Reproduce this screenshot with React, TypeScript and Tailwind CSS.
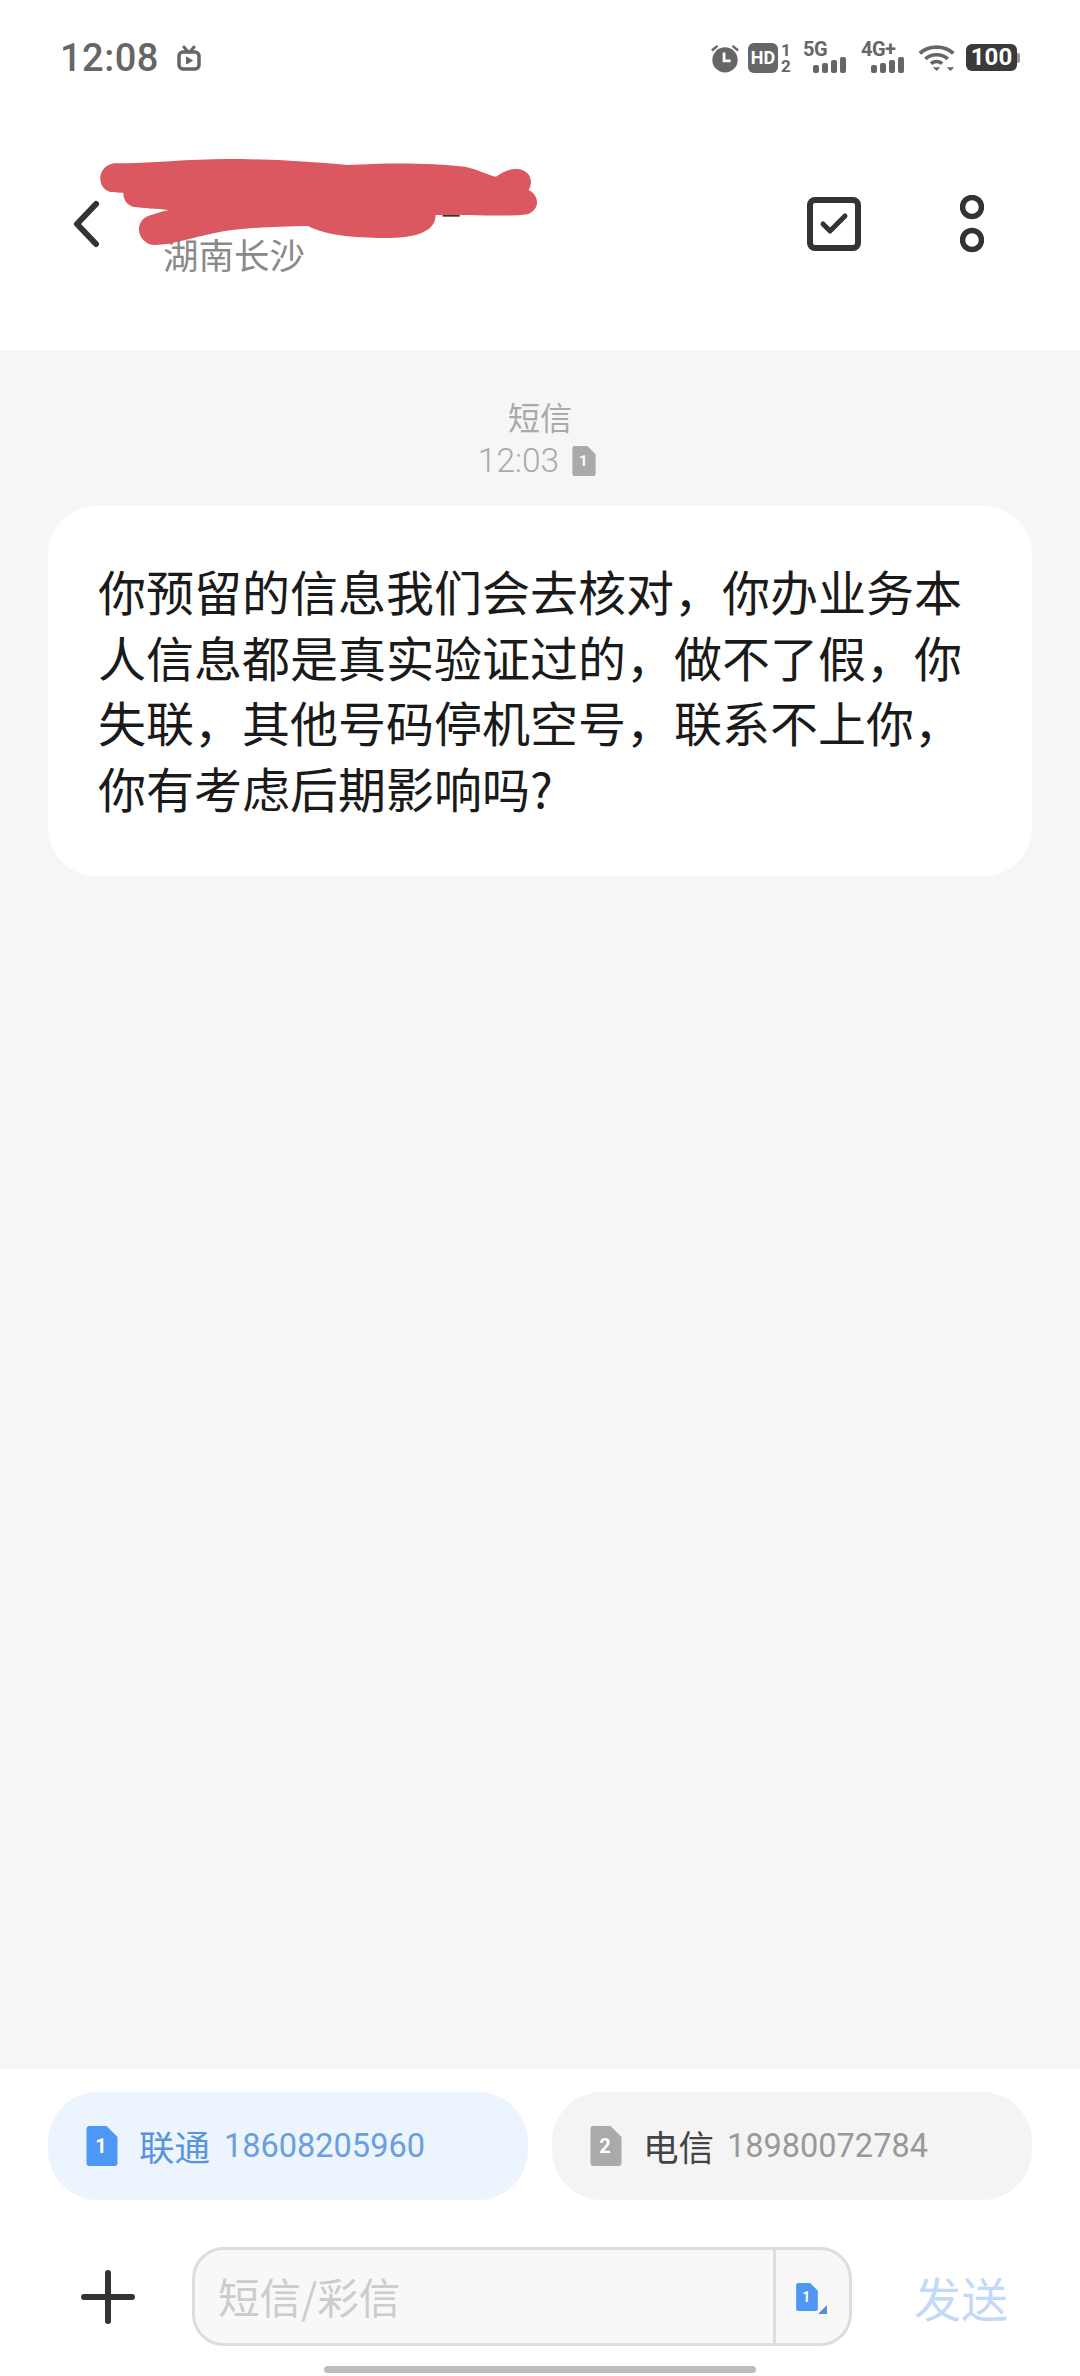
import React from 'react';

const CJK = '"Noto Sans CJK SC", "Noto Sans", sans-serif';
const ink = '#333333';

// sim card glyph with clipped corner, number stays real text
const SimIcon = ({ n, color, w, h }: { n: string; color: string; w: number; h: number }) => (
  <svg width={w} height={h} viewBox="0 0 31 40" className="shrink-0">
    <path d="M3 0H20L31 11V37a3 3 0 0 1-3 3H3a3 3 0 0 1-3-3V3a3 3 0 0 1 3-3Z" fill={color} />
    <text x="14.5" y="27" textAnchor="middle" fontSize="20" fontWeight="700" fill="#fff" fontFamily="Roboto, sans-serif">{n}</text>
  </svg>
);

const SignalBars = () => (
  <div className="flex items-end gap-[3px] h-[16px]">
    <div className="w-[6px] h-[8px] rounded-[2px] bg-[#666666]" />
    <div className="w-[6px] h-[10px] rounded-[2px] bg-[#666666]" />
    <div className="w-[6px] h-[13px] rounded-[2px] bg-[#666666]" />
    <div className="w-[6px] h-[16px] rounded-[2px] bg-[#666666]" />
  </div>
);

const StatusBar = () => (
  <div className="flex items-center justify-between h-[115px] pl-[60px] pr-[60px] text-[#666666]">
    <div className="flex items-center gap-[17px]">
      <span className="text-[38px] leading-none font-medium tracking-[0.5px] font-['Roboto']">12:08</span>
      <svg width="26" height="26" viewBox="0 0 26 26" fill="none" stroke="#666666">
        <path d="M8 2l4 5M18 2l-4 5" strokeWidth="3" strokeLinecap="round" />
        <rect x="3" y="7" width="20" height="17" rx="4" strokeWidth="3.5" />
        <path d="M10.5 12l6 3.5-6 3.5Z" fill="#666666" strokeWidth="1" />
      </svg>
    </div>
    <div className="flex items-center h-[32px] font-['Roboto'] font-bold">
      <svg width="30" height="30" viewBox="0 0 32 32" className="mr-[8px]">
        <circle cx="16" cy="18" r="13.5" fill="#666666" />
        <path d="M15 10v9h7" fill="none" stroke="#fff" strokeWidth="3" />
        <path d="M2 8l6-5M30 8l-6-5" stroke="#666666" strokeWidth="2.5" />
      </svg>
      <div className="w-[30px] h-[30px] rounded-[6px] bg-[#666666] text-white text-[18px] leading-[30px] text-center">HD</div>
      <div className="flex flex-col w-[12px] ml-[2px] text-[17px] leading-[16px] text-center">
        <span>1</span>
        <span>2</span>
      </div>
      <div className="flex flex-col ml-[11px] w-[45px]">
        <span className="text-[20px] leading-[15px] tracking-[-0.5px]">5G</span>
        <div className="ml-[10px]"><SignalBars /></div>
      </div>
      <div className="flex flex-col ml-[13px] w-[45px]">
        <span className="text-[20px] leading-[15px] tracking-[-0.5px]">4G+</span>
        <div className="ml-[10px]"><SignalBars /></div>
      </div>
      <svg width="39" height="30" viewBox="0 0 42 30" className="ml-[12px]" fill="none" stroke="#666666" strokeWidth="4">
        <path d="M2 10C11 1 29 1 38 10" />
        <path d="M8 16c6-6 18-6 24 0" />
        <path d="M14 21c3-3 9-3 12 0" />
        <path d="M16 25h8l-4 4Z" fill="#666666" strokeWidth="0" />
        <path d="M31 25h8l-4 4Z" fill="#666666" strokeWidth="0" />
      </svg>
      <div className="flex items-center ml-[9px]">
        <div className="w-[51px] h-[27px] rounded-[6px] bg-[#3a3a3a] text-white text-[24px] leading-[27px] text-center">100</div>
        <div className="w-[3px] h-[10px] rounded-r-[2px] bg-[#999999]" />
      </div>
    </div>
  </div>
);

const Header = () => (
  <div className="relative h-[350px] bg-white shrink-0">
    <StatusBar />
    <div className="flex items-center h-[218px] pl-[72px]">
      <svg width="28" height="48" viewBox="0 0 28 48" fill="none" stroke={ink} strokeWidth="6" strokeLinecap="round" strokeLinejoin="round" className="shrink-0">
        <path d="M24 4 5 24l19 20" />
      </svg>
      <div className="flex-1 pl-[63px] pt-[62px]">
        <span className="text-[35.5px] leading-none text-[#8a8a8a]" style={{ fontFamily: CJK }}>湖南长沙</span>
      </div>
      <svg width="54" height="54" viewBox="0 0 54 54" fill="none" stroke={ink} className="shrink-0">
        <rect x="3" y="3" width="48" height="48" rx="5" strokeWidth="6" />
        <path d="M16 27l7 7 15-15" strokeWidth="5" strokeLinecap="round" strokeLinejoin="round" />
      </svg>
      <svg width="24" height="58" viewBox="0 0 24 58" fill="none" stroke={ink} strokeWidth="5.5" className="shrink-0 ml-[99px] mr-[96px]">
        <circle cx="12" cy="12" r="9.5" />
        <circle cx="12" cy="45" r="9.5" />
      </svg>
    </div>
    {/* red marker scribble over the contact name */}
    <svg width="540" height="360" viewBox="0 0 1568 1080" preserveAspectRatio="none" className="absolute left-0 top-0">
      <rect x="1285" y="645" width="50" height="5" fill="#333333" />
      <path
        d="M330 490C440 490 550 477 660 477C780 477 900 485 1010 495C1120 488 1250 488 1350 500C1390 508 1415 525 1440 530C1460 515 1480 505 1505 507C1535 510 1552 540 1535 570C1565 585 1570 625 1535 642C1510 650 1380 645 1265 645C1265 690 1220 712 1130 714C1050 714 950 710 895 678C800 680 700 682 620 700C560 712 500 735 450 735C405 735 385 675 425 650C445 642 470 635 490 630C450 625 420 625 385 620C365 612 358 595 358 578C345 578 335 578 320 576C280 565 280 500 330 490Z"
        fill="#dc5860"
      />
    </svg>
  </div>
);

const Thread = () => (
  <div className="flex-1 bg-[#f6f6f6] px-[48px] pt-[46px]" style={{ fontFamily: CJK }}>
    <div className="flex flex-col items-center text-[#aaaaaa]">
      <span className="text-[32px] leading-[40px]">短信</span>
      <div className="flex items-center gap-[13px] h-[40px] mt-[5px] -translate-x-[3px]">
        <span className="text-[33.5px] leading-none font-['Roboto'] font-light">12:03</span>
        <SimIcon n="1" color="#aaaaaa" w={24} h={30} />
      </div>
    </div>
    <div className="mt-[25px] h-[370px] rounded-[48px] bg-white pl-[50px] pr-[48px] pt-[52px] text-[48px] leading-[65.5px] text-[#1a1a1a]">
      你预留的信息我们会去核对，你办业务本人信息都是真实验证过的，做不了假，你失联，其他号码停机空号，联系不上你，你有考虑后期影响吗?
    </div>
  </div>
);

const Composer = () => (
  <div className="h-[307px] bg-white shrink-0 pt-[23px]" style={{ fontFamily: CJK }}>
    <div className="flex gap-[24px] px-[48px]">
      <div className="flex items-center w-[480px] h-[108px] rounded-[50px] bg-[#ecf4fe] pl-[38px]">
        <SimIcon n="1" color="#4f97f5" w={32} h={40} />
        <span className="ml-[21px] text-[35.5px] leading-none text-[#5a94dc]">联通</span>
        <span className="ml-[14px] text-[32.5px] leading-none text-[#6a9edd] font-['Roboto']">18608205960</span>
      </div>
      <div className="flex items-center w-[480px] h-[108px] rounded-[50px] bg-[#f4f4f4] pl-[38px]">
        <SimIcon n="2" color="#aaaaaa" w={32} h={40} />
        <span className="ml-[21px] text-[35.5px] leading-none text-[#444444]">电信</span>
        <span className="ml-[13px] text-[32.5px] leading-none text-[#999999] font-['Roboto']">18980072784</span>
      </div>
    </div>
    <div className="flex items-center mt-[47px] h-[99px]">
      <svg width="54" height="54" viewBox="0 0 54 54" stroke={ink} strokeWidth="6" strokeLinecap="round" className="ml-[81px] shrink-0">
        <path d="M27 3v48M3 27h48" />
      </svg>
      <div className="flex items-stretch ml-[57px] w-[660px] h-[99px] rounded-[32px] border-[3px] border-[#dddddd] bg-[#f8f8f8]">
        <div className="flex-1 flex items-center pl-[23px] text-[41.5px] leading-none text-[#cccccc]">短信/彩信</div>
        <div className="relative flex items-center w-[76px] border-l-[3px] border-[#dddddd] pl-[20px]">
          <SimIcon n="1" color="#4f97f5" w={22} h={28} />
          <svg width="9" height="9" viewBox="0 0 9 9" className="absolute left-[42px] top-[55px]">
            <path d="M9 0V9H0Z" fill="#5a8fd8" />
          </svg>
        </div>
      </div>
      <span className="ml-[62px] text-[47px] leading-none text-[#c2daf5]">发送</span>
    </div>
    <div className="mt-[20px] mx-auto w-[432px] h-[7px] rounded-full bg-[#bdbdbd]" />
  </div>
);

export default function App() {
  return (
    <div className="flex flex-col w-[1080px] h-[2376px] overflow-hidden bg-white">
      <Header />
      <Thread />
      <Composer />
    </div>
  );
}
